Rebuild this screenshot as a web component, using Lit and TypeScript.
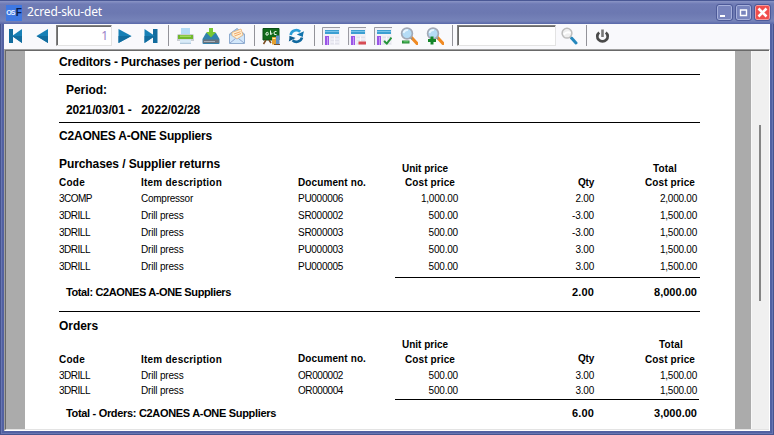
import { LitElement, html, svg, css, nothing, TemplateResult } from "lit";
import { customElement, property } from "lit/decorators.js";

/** A run of text whose tracking is set so that it fills a printed width. */
@customElement("fit-text")
class FitText extends LitElement {
  @property({ type: Number }) width = 0;
  @property() text = "";
  static styles = css`
    :host { display: inline-block; white-space: pre; }
  `;
  render() {
    return html`<span>${this.text}</span>`;
  }
  updated() {
    const span = this.renderRoot.querySelector("span")!;
    span.style.letterSpacing = "0";
    const natural = span.getBoundingClientRect().width;
    if (this.width) span.style.letterSpacing = (this.width - natural) / this.text.length + "px";
  }
}

type Cell = { t: string; w: number; kind?: string; pad?: number; lift?: number } | null;
type Row = { h: number; cells: Cell[] } | { gap: number; rule: "full" | "part" | "short" };

const head = (t: string, w: number, pad = 0, lift = 0): Cell => ({ t, w, kind: "head", pad, lift });
const item = (h: number, code: string, cw: number, desc: string, dw: number, doc: string, price: string, pw: number, qty: string, qw: number, total: string): Row => ({
  h,
  cells: [
    { t: code, w: cw }, { t: desc, w: dw }, { t: doc, w: 45 },
    { t: price, w: pw }, { t: qty, w: qw }, { t: total, w: 37 },
  ],
});
const drill = (h: number, doc: string, qty: string): Row =>
  item(h, "3DRILL", 31, "Drill press", 42.5, doc, "500.00", 29.5, qty, qty[0] === "-" ? 22 : 18.5, "1,500.00");

const rows: Row[] = [
  { h: 18, cells: [{ t: "Creditors - Purchases per period - Custom", w: 235, kind: "title" }] },
  { gap: 5, rule: "full" },
  { h: 22, cells: [{ t: "Period:", w: 41, kind: "title", pad: 7 }] },
  { h: 20, cells: [{ t: "2021/03/01 -   2022/02/28", w: 134, kind: "title", pad: 7 }] },
  { gap: 5, rule: "full" },
  { h: 20, cells: [{ t: "C2AONES A-ONE Suppliers", w: 153, kind: "title" }] },
  {
    h: 32,
    cells: [
      { t: "Purchases / Supplier returns", w: 161, kind: "title", lift: 4 }, null, null,
      head("Unit price", 46, 10), null, head("Total", 24, 20),
    ],
  },
  { h: 14, cells: [head("Code", 26), head("Item description", 81), head("Document no.", 68), head("Cost price", 50, 3), head("Qty", 16), head("Cost price", 50, 2)] },
  item(16, "3COMP", 33, "Compressor", 52, "PU000006", "1,000.00", 37, "2.00", 18.5, "2,000.00"),
  drill(17, "SR000002", "-3.00"),
  drill(17, "SR000003", "-3.00"),
  drill(17, "PU000003", "3.00"),
  drill(17, "PU000005", "3.00"),
  { gap: 4, rule: "part" },
  {
    h: 21,
    cells: [
      { t: "Total: C2AONES A-ONE Suppliers", w: 165, kind: "total", pad: 7 }, null, null, null,
      { t: "2.00", w: 22, kind: "total" }, { t: "8,000.00", w: 43, kind: "total" },
    ],
  },
  { gap: 12, rule: "full" },
  { h: 21, cells: [{ t: "Orders", w: 39, kind: "title" }] },
  { h: 18, cells: [null, null, null, head("Unit price", 46, 10), null, head("Total", 24, 14)] },
  { h: 15, cells: [head("Code", 26), head("Item description", 81), head("Document no.", 68, 0, 1), head("Cost price", 50, 3), head("Qty", 16, 0, 1), head("Cost price", 50, 2)] },
  drill(16, "OR000002", "3.00"),
  drill(15, "OR000004", "3.00"),
  { gap: 2, rule: "short" },
  {
    h: 20,
    cells: [
      { t: "Total - Orders: C2AONES A-ONE Suppliers", w: 210, kind: "total", pad: 7 }, null, null, null,
      { t: "6.00", w: 22, kind: "total" }, { t: "3,000.00", w: 43, kind: "total" },
    ],
  },
];

@customElement("report-page")
class ReportPage extends LitElement {
  static styles = css`
    :host { display: block; box-sizing: border-box; background: #fff; padding-left: 34px; color: #000;
      font-family: "Liberation Sans", Arial, sans-serif; overflow: hidden; }
    .row { display: grid; grid-template-columns: 82px 157px 97px 63px 136px 103px; align-items: end; }
    .cell { min-width: 0; display: flex; font-size: 10px; line-height: 14px; white-space: nowrap; margin-bottom: -1px; }
    .num { justify-content: flex-end; }
    .head { font-weight: 700; }
    .title { font-weight: 700; font-size: 12px; margin-bottom: 0; }
    .total { font-weight: 700; font-size: 11px; margin-bottom: 0; }
    .rule { height: 1px; width: 641px; background: #000; }
    .part { margin-left: 336px; width: 305px; }
    .short { margin-left: 336px; width: 304px; }
  `;
  render() {
    return rows.map((r) => {
      if ("rule" in r) return html`<div class="rule ${r.rule}" style="margin-top:${r.gap}px"></div>`;
      return html`<div class="row" style="height:${r.h}px">
        ${r.cells.map((c, i) => {
          if (!c) return html`<div></div>`;
          const side = i > 2 ? "right" : "left";
          return html`<div class="cell ${i > 2 ? "num" : ""} ${c.kind ?? ""}"
            style="padding-${side}:${c.pad ?? 0}px;padding-bottom:${c.lift ?? 0}px"
            ><fit-text .text=${c.t} .width=${c.w}></fit-text></div>`;
        })}
      </div>`;
    });
  }
}

const lens = (sign: TemplateResult) => svg`
  <path d="M11.5 10.5 17 16.5" stroke="#f08a24" stroke-width="3.2" stroke-linecap="round"/>
  <path d="M10.5 10.5 12.3 12.3" stroke="#8c8c8c" stroke-width="1.6"/>
  <circle cx="7" cy="6.5" r="5.4" fill="#b5dcf6" stroke="#a3a9b6" stroke-width="1.7"/>
  <path d="M3.6 6A3.5 3.5 0 0 1 8 3.2" stroke="#e9f6ff" stroke-width="1.8" fill="none"/>${sign}`;
const table = (mark: TemplateResult | typeof nothing) => svg`
  <path d="M0 0H18V18H0Z" fill="#f1f1f6"/>
  <path d="M.5 18V.5H18" stroke="#9a9aa2" fill="none"/>
  <path d="M3 3H17V7H3Z" fill="#3c9fd2"/><path d="M3 4.5H17" stroke="#78c3e8"/>
  <path d="M3 9H7V18H3Z" fill="#9a55e6"/><path d="M5.5 10V18" stroke="#c79cf6"/>
  <path d="M8.5 9.5H17V17.5H8.5Z" fill="#e2e2ec"/>
  <path d="M8.5 12H17M8.5 15H17M12.5 9.5V17.5" stroke="#fafaff"/>${mark}`;

const icons: Record<string, TemplateResult> = {
  first: svg`<path d="M2 2H6V16H2Z" fill="#126c9e"/><path d="M15 2V16L5 9Z" fill="#1780b6"/><path d="M15 9V16L5 9Z" fill="#126c9e"/>`,
  prev: svg`<path d="M15 2V16L3.5 9Z" fill="#1780b6"/><path d="M15 9V16L3.5 9Z" fill="#126c9e"/>`,
  next: svg`<path d="M2.5 2V16L15.5 9Z" fill="#1780b6"/><path d="M2.5 9V16L15.5 9Z" fill="#126c9e"/>`,
  last: svg`<path d="M11 2H15.5V16H11Z" fill="#126c9e"/><path d="M2.5 2V16L13 9Z" fill="#1780b6"/><path d="M2.5 9V16L13 9Z" fill="#126c9e"/>`,
  print: svg`<path d="M5 1H14V9H5Z" fill="#b5dcf5"/><path d="M2.5 7H16.5Q18 7 18 9V14H1V9Q1 7 2.5 7Z" fill="#c9cdd3"/>
    <path d="M2 8H17V12H2Z" fill="#72b82c"/><path d="M4 8.5H15V10H4Z" fill="#a0d85d"/>
    <path d="M4 12.5H15V16.5H4Z" fill="#d9ebf8"/><path d="M4 16.3H15" stroke="#a3bfd5"/>`,
  save: svg`<path d="M4 6H14L17.5 12V16Q17.5 17 16.5 17H1.5Q.5 17 .5 16V12Z" fill="#3182ad"/>
    <path d="M1 12.5H17V16H1Z" fill="#68727d"/><path d="M2 14.5H13" stroke="#a9b2ba"/>
    <path d="M7 1H11V5H14L9 10.5 4 5H7Z" fill="#78c832"/>`,
  mail: svg`<path d="M1.5 7 9 1.5 16.5 7V16.5H1.5Z" fill="#9fc5e8" stroke="#8facd0"/>
    <path d="M4 5.5 13 2 15 8 9 12 4 8.5Z" fill="#fff0d4" stroke="#edb276" stroke-width=".8"/>
    <path d="M6 7 12.5 4.7M6.5 9 13 6.5" stroke="#f2a766"/>
    <path d="M2 8 9 12.5 16 8V16H2Z" fill="#d2e7fa"/><path d="M2 16 7.5 11.5M16 16 10.5 11.5" stroke="#91a6d0" fill="none"/>`,
  board: svg`<path d="M1 1.5H17V13H1Z" fill="#126a1b" stroke="#0a4e16"/>
    <path d="M4 6Q7 4 6 8Q3 9 4 6M8.5 3.5V7.5Q11.5 7 9 5.5M14.5 4.5Q11 4 12.5 7.5H14.5" stroke="#e6f4e5" fill="none"/>
    <path d="M4 13 1.5 17M7 13 9 16" stroke="#7a4b20" stroke-width="1.5"/>
    <path d="M10 10H14V17.5H10Z" fill="#e5a02e"/><path d="M14 8.5H17.5V17.5H14Z" fill="#5d8fc6"/>
    <path d="M10.5 11.5H13.5" stroke="#fff2a8"/><path d="M12 17.5H18" stroke="#754f28"/>`,
  sync: svg`<path d="M2.6 8A5.7 5.7 0 0 1 12.2 4.8" fill="none" stroke="#2b9dd6" stroke-width="2.6"/>
    <path d="M16 4.2Q15 7 14.8 10L8.8 7.4Z" fill="#1273ad"/>
    <path d="M14 10.5A5.7 5.7 0 0 1 4.6 13.2" fill="none" stroke="#126aa0" stroke-width="2.7"/>
    <path d="M.8 14.4Q1.6 11.5 1.4 8.8L7.6 11Z" fill="#0e5d90"/>`,
  table: table(nothing),
  tableMinus: table(svg`<path d="M10.5 14.5H18V17.5H10.5Z" fill="#d84c55"/>`),
  tableCheck: table(svg`<path d="M10 14 12.8 16.5 17.5 10.5" fill="none" stroke="#25933a" stroke-width="2"/>`),
  zoomOut: lens(svg`<path d="M2 15H9.5" stroke="#258c37" stroke-width="3"/><path d="M3.5 14.8H8.5" stroke="#6acf72"/>`),
  zoomIn: lens(svg`<path d="M2 13.5H10M6 9.5V17.5" stroke="#148529" stroke-width="3"/>`),
  search: svg`<path d="M11.5 11 16 16" stroke="#2587bd" stroke-width="3" stroke-linecap="round"/>
    <circle cx="7" cy="6.2" r="4.9" fill="#efefef" stroke="#bdbdbd" stroke-width="1.5"/>
    <path d="M3.7 7.5Q7 4 10.5 6" stroke="#fff" stroke-width="2" fill="none"/>`,
  power: svg`<path d="M5.2 5.5A5.2 5 0 1 0 11.8 5.5" fill="none" stroke="#4a4a4a" stroke-width="2.7"/>
    <path d="M8.5 2.5V10" stroke="#777" stroke-width="2.6"/>`,
};

@customElement("app-root")
class AppRoot extends LitElement {
  static styles = css`
    :host { display: flex; flex-direction: column; box-sizing: border-box; width: 774px; height: 435px; background: #5261a2;
      border-top: 1px solid #4a5895; padding: 0 4px 4px; box-shadow: inset 1px 0 #46548f, inset -1px 0 #46548f, inset 0 -1px #46548f,
      inset 2px 0 #6876b3, inset -2px 0 #6876b3, inset 0 -2px #6876b3; overflow: hidden; }
    .bar { height: 23px; flex: none; margin: 0 -4px; padding: 0 4px 0 6px; display: flex; align-items: center;
      background: linear-gradient(#8b95c6 0, #6f7bb5 3px, #6c78b1 12px, #7683b9 20px, #5867a9 23px); }
    .logo { width: 16px; height: 16px; background: #3f78e2; display: flex; align-items: center; justify-content: center; overflow: hidden;
      font: 700 7px/16px "Liberation Sans", sans-serif; letter-spacing: -.8px; color: #e6efff; flex: none; }
    .logo b { color: #071a4b; font-size: 10px; margin-left: 1px; letter-spacing: 0; }
    .name { flex: 1; margin-left: 5px; padding-bottom: 1px; color: #fff; font: 12px/18px "Noto Sans", "Open Sans", sans-serif; }
    .btn { width: 15px; height: 15px; margin-left: 4px; border-radius: 2px; border: 1px solid #a6b0db; background: #7884bd;
      outline: 1px solid #4d5a99; box-sizing: border-box; flex: none; }
    .close { background: #f04e4c; border-color: #f39b9d; }
    .btn svg { display: block; }
    .tools { height: 25px; flex: none; display: flex; align-items: center; background: #f9f9fc; box-sizing: border-box; padding-bottom: 2px; }
    .slot { width: 26px; display: flex; justify-content: center; }
    .slot svg { display: block; }
    .slot.a { width: 24px; } .slot.b { width: 28px; }
    .sep { width: 1px; height: 21px; background: #929299; margin: 0 3px 0 4px; }
    .field { box-sizing: border-box; height: 21px; width: 56px; background: #fff; border: 1px solid #808080; border-right-color: #e3e3e3;
      border-bottom-color: #e3e3e3; box-shadow: inset 1px 1px #696969; text-align: right; padding-right: 3px;
      font: 12px/19px "Noto Sans", sans-serif; color: #9a80c8; }
    .wide { width: 99px; margin-left: 1px; }
    .view { flex: 1; min-height: 0; display: flex; border-top: 1px solid #a0a0a0; border-left: 1px solid #a0a0a0;
      border-bottom: 1px solid #fff; border-right: 1px solid #fff; background: #ababab; }
    .inner { flex: 1; display: flex; border-top: 1px solid #696969; border-left: 1px solid #696969; border-bottom: 1px solid #e3e3e3; min-width: 0; }
    report-page { width: 710px; margin-left: 19px; }
    .track { width: 17px; margin-left: 16px; border-left: 1px solid #f8f8f8; background: #f0f0f0; }
    .thumb { width: 2px; height: 176px; margin: 74px 0 0 7px; background: #858585; }
  `;
  private icon(name: string, size = "") {
    return html`<div class="slot ${size}"><svg width="18" height="18" viewBox="0 0 18 18" fill="none">${icons[name]}</svg></div>`;
  }
  render() {
    const group = (...names: string[]) => names.map((n) => this.icon(n));
    const sep = html`<div class="sep"></div>`;
    const glyph = (d: string, w: number) => html`<svg width="13" height="13" viewBox="0 0 13 13"><path d=${d} fill="none" stroke="#fff" stroke-width=${w}/></svg>`;
    return html`
      <div class="bar">
        <div class="logo">OS<b>F</b></div>
        <div class="name"><fit-text .text=${"2cred-sku-det"} .width=${75}></fit-text></div>
        <div class="btn">${glyph("M2 10H7", 2)}</div>
        <div class="btn">${glyph("M3.5 4H9.5V9.5H3.5Z", 1.4)}</div>
        <div class="btn close">${glyph("M2.5 2.5 10.5 10.5M10.5 2.5 2.5 10.5", 2.6)}</div>
      </div>
      <div class="tools">
        ${this.icon("first", "a")}${this.icon("prev", "b")}
        <div class="field">1</div>
        ${group("next", "last")}${sep}
        ${group("print", "save", "mail")}${sep}
        ${group("board", "sync")}${sep}
        ${group("table", "tableMinus", "tableCheck", "zoomOut", "zoomIn")}${sep}
        <div class="field wide"></div>
        ${group("search")}${sep}${group("power")}
      </div>
      <div class="view"><div class="inner">
        <report-page></report-page>
        <div class="track"><div class="thumb"></div></div>
      </div></div>
    `;
  }
}
